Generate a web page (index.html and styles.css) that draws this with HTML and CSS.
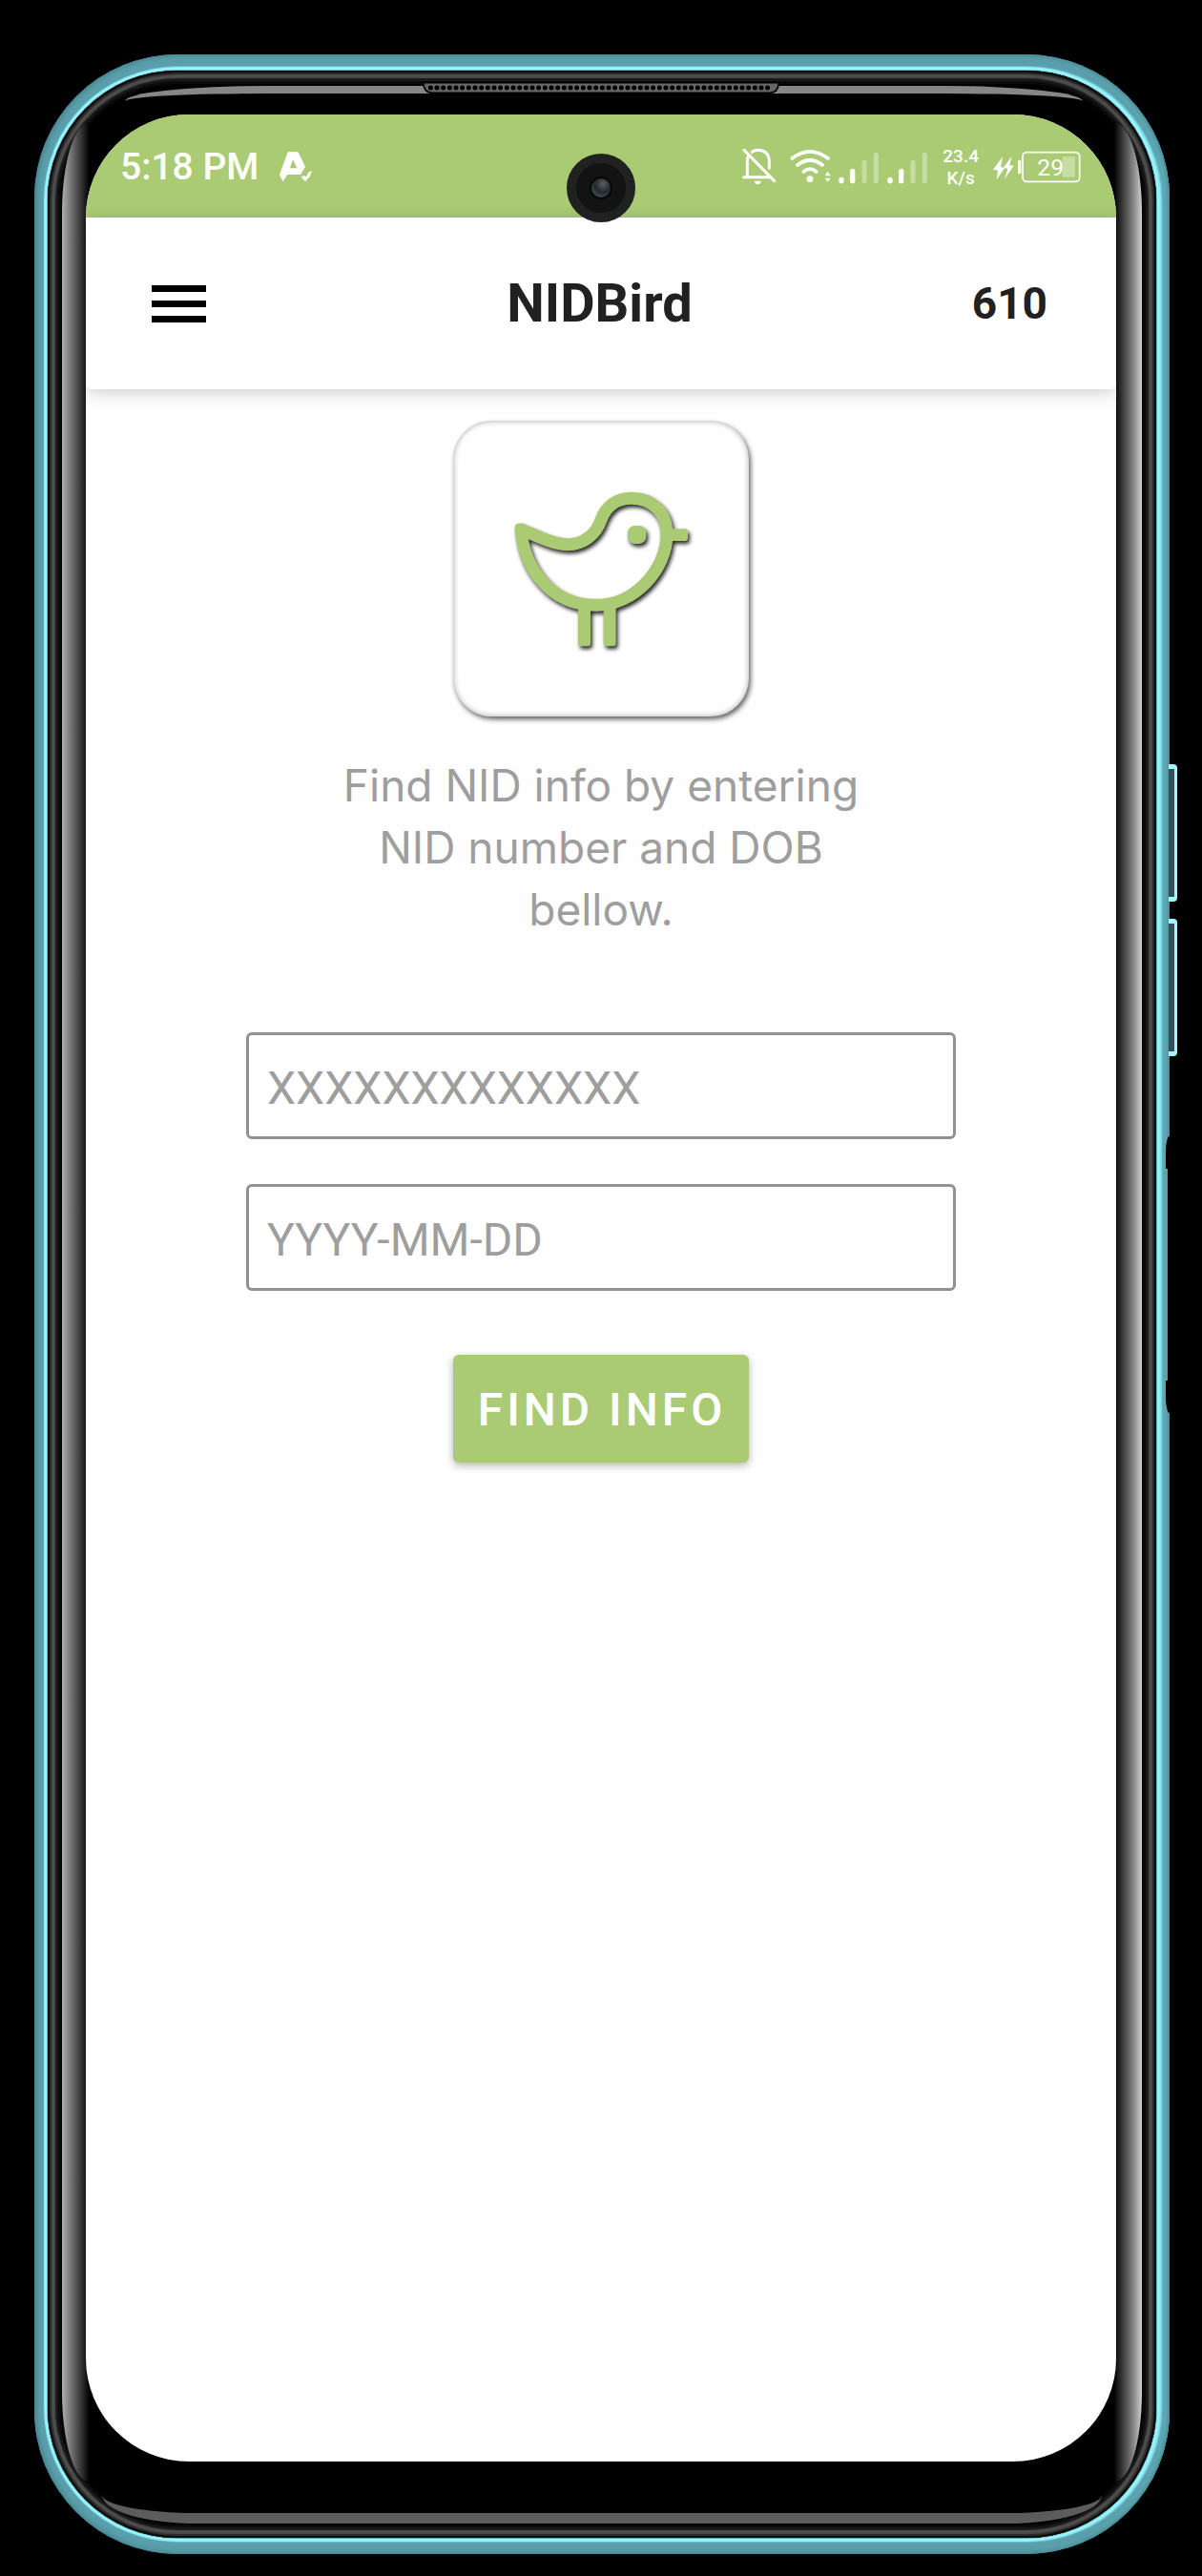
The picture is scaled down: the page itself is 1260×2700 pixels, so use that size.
FILE: index.html
```
<!DOCTYPE html>
<html lang="en">
<head>
<meta charset="utf-8">
<meta name="viewport" content="width=device-width, initial-scale=1">
<title>NIDBird</title>
<link rel="stylesheet" href="styles.css">
</head>
<body>
<div class="phone">
  <span class="side-key side-key-up"></span>
  <span class="side-key side-key-down"></span>
  <span class="side-recess"></span>
  <div class="bezel">
    <span class="glare glare-top"></span>
    <span class="glare glare-bottom"></span>
    <span class="glare glare-left"></span>
    <span class="glare glare-right"></span>
    <svg class="speaker" viewBox="0 0 1122 36" aria-hidden="true">
      <path d="M2 2H1120Q1118 34 1092 34H30Q4 34 2 2Z" fill="#666" stroke="#000" stroke-width="5"/>
      <path d="M25 18H1100" stroke="#000" stroke-width="15" stroke-linecap="round" stroke-dasharray="0 20"/>
    </svg>
    <div class="screen">
      <span class="camera"><span class="lens"></span></span>
      <div class="status-bar">
        <div class="status-left">
          <span class="clock">5:18 PM</span>
          <svg class="app-mark" viewBox="880 353 102 96" aria-hidden="true">
            <path fill="#fff" fill-rule="evenodd" d="M911 353H934Q938 353 940 357L961 400L946 425H905L891 447L880 426L905 357Q907 353 911 353ZM922 378L913 405H935Z"/>
            <path fill="#fff" d="M947 431L960 429L966 432L970 419L982 413L976 430L961 447Z"/>
          </svg>
        </div>
        <div class="status-right">
          <svg class="signals" viewBox="52 42 585 120" fill="none" stroke="#fff" stroke-linecap="round" aria-hidden="true">
            <path stroke-width="9" stroke-linejoin="round" d="M57 134H136M68 132V82Q68 70 74 65M83 55Q92 49 101 49Q136 50 137 84V106M58 49L153 146"/>
            <path d="M90 146H112Q109 156 101 156Q93 156 90 146Z" fill="#fff" stroke="none"/>
            <path stroke-width="11" d="M209 75Q265 32 322 75M226 96Q265 66 304 96M245 117Q265 100 285 117"/>
            <circle cx="265" cy="140" r="10" fill="#fff" stroke="none"/>
            <path d="M312 130L321 116L330 130ZM312 137L321 149L330 137Z" fill="#fff" stroke="none"/>
            <path stroke-width="16" d="M364 142V146M399 115V146M517 142V146M552 115V146"/>
            <path stroke-width="15" stroke-opacity=".35" d="M436 88V146M473 64V146M589 88V146M626 64V146"/>
          </svg>
          <span class="speed">23.4<br>K/s</span>
          <svg class="battery" viewBox="843 48 276 108" aria-label="Battery 29 percent">
            <path fill="#fff" d="M873 70L843 110L858 113L854 142L880 105L867 103ZM902 68L876 104L889 108L879 140L908 98L895 97Z"/>
            <rect x="921" y="80" width="10" height="44" rx="5" fill="#fff"/>
            <rect x="936" y="56" width="179" height="92" rx="13" fill="none" stroke="#fff" stroke-width="5"/>
            <rect x="1061" y="69" width="40" height="65" rx="4" fill="#fff" fill-opacity=".35"/>
            <text class="battery-level" x="982" y="129">29</text>
          </svg>
        </div>
      </div>
      <header class="app-bar">
        <button class="menu" type="button" aria-label="Menu"><span></span><span></span><span></span></button>
        <h1 class="title">NIDBird</h1>
        <span class="balance">610</span>
      </header>
      <main class="content">
        <div class="logo">
          <svg class="bird" viewBox="75 63 930 930" role="img" aria-label="Bird">
            <g fill="none" stroke="#aacb74" stroke-width="39" stroke-linejoin="round">
              <path d="M289 405C296 520 376 643 525 643C645 643 747 530 747 420C747 350 700 307 635 307C585 307 555 335 540 375C525 420 485 452 435 452C390 452 345 427 289 405Z"/>
            </g>
            <g fill="#aacb74">
              <rect x="269" y="386" width="36" height="30" rx="12"/>
              <rect x="468" y="640" width="39" height="132" rx="9"/>
              <rect x="548" y="640" width="39" height="132" rx="9"/>
              <rect x="740" y="403" width="73" height="38" rx="9"/>
              <rect x="624" y="393" width="58" height="57" rx="22"/>
            </g>
          </svg>
        </div>
        <p class="hint">Find NID info by entering NID number and DOB bellow.</p>
        <form class="lookup">
          <input class="field" type="text" aria-label="NID number" placeholder="XXXXXXXXXXXXX">
          <input class="field" type="text" aria-label="Date of birth" placeholder="YYYY-MM-DD">
          <button class="submit" type="button">FIND INFO</button>
        </form>
      </main>
    </div>
  </div>
</div>
</body>
</html>
```
FILE: styles.css
```
* { box-sizing: border-box; }

body {
  margin: 0;
  min-height: 100vh;
  padding: 57px 34px 23px 36px;
  display: flex;
  background: #000;
  font-family: Roboto, "Liberation Sans", sans-serif;
}

/* Phone body */
.phone {
  position: relative;
  flex: 1;
  min-width: 0;
  display: flex;
  padding: 17px 14px;
  border-radius: 150px;
  background: #5a9fab;
  box-shadow: inset 0 0 5px 2px #437f8a, inset -4px 0 6px #6fc3d0;
}

.side-key {
  position: absolute;
  left: calc(100% - 1px);
  width: 9px;
  height: 144px;
  border: 3px solid #9ff8ff;
  border-width: 5px 3px 5px 0;
  border-radius: 0 4px 4px 0;
  background: #355055;
}
.side-key-up { top: 744px; }
.side-key-down { top: 906px; }

.side-recess {
  position: absolute;
  top: 1134px;
  right: 0;
  width: 4px;
  height: 290px;
  border: solid #000;
  border-width: 34px 2px 34px 0;
  border-radius: 6px 0 0 6px / 24px 0 0 24px;
}

.bezel {
  position: relative;
  flex: 1;
  min-width: 0;
  display: flex;
  padding: 46px 42px 80px 40px;
  border-radius: 136px;
  background: #000;
  box-shadow:
    inset 0 0 0 2px #0c0c0c,
    inset 0 0 1px 4px #2a2a2a,
    inset 0 0 1px 8px #4c4c4c,
    inset 0 0 1px 11px #191919,
    inset 0 0 0 14px #0a0a0a,
    0 0 0 1px #5fb4c0,
    0 0 1px 4px #97f2fa,
    2px 0 2px 4px #8ae6f0;
}

.glare { position: absolute; }
.glare-top {
  top: 16px;
  left: 81px;
  right: 77px;
  height: 16px;
  border-top: 8px solid #868686;
  border-radius: 150px 150px 0 0 / 16px 16px 0 0;
}
.glare-bottom {
  bottom: 15px;
  left: 57px;
  right: 57px;
  height: 30px;
  border-bottom: 11px solid #5c5c5c;
  border-radius: 0 0 100px 100px / 0 0 30px 30px;
}
.glare-left,
.glare-right {
  top: 55px;
  bottom: 59px;
  width: 32px;
}
.glare-left {
  left: 15px;
  border-radius: 30px 4px 4px 30px / 100px 24px 24px 100px;
  background: linear-gradient(90deg, #b0b0b0, #7c7c7c 8px, #000 29px);
}
.glare-right {
  right: 15px;
  border-radius: 4px 30px 30px 4px / 24px 100px 100px 24px;
  background: linear-gradient(270deg, #d0d0d0, #8c8c8c 8px, #000 29px);
}

.speaker {
  position: absolute;
  top: 12px;
  left: 50%;
  width: 374px;
  height: 12px;
  margin-left: -188px;
}

.camera {
  position: absolute;
  z-index: 1;
  top: 41px;
  left: 50%;
  width: 72px;
  height: 72px;
  margin-left: -36px;
  display: grid;
  place-items: center;
  border: 10px solid #1f2221;
  border-radius: 50%;
  background: #121312;
}
.lens {
  width: 24px;
  height: 24px;
  border: 2px solid #070808;
  border-radius: 50%;
  background: radial-gradient(circle at 60% 30%, #596064, #22282b 45%, #3a4a50 75%, #101314);
}

/* Screen */
.screen {
  position: relative;
  flex: 1;
  min-width: 0;
  display: flex;
  flex-direction: column;
  overflow: hidden;
  border-radius: 108px;
  background: #fefefe;
}

.status-bar {
  height: 108px;
  padding: 2px 37px 0 36px;
  display: flex;
  align-items: center;
  justify-content: space-between;
  background: #aacb74;
  color: #fff;
}
.status-left { display: flex; align-items: center; gap: 22px; }
.status-right { display: flex; align-items: center; gap: 15px; }
.clock { font-size: 39px; line-height: 44px; font-weight: 500; }
.app-mark { width: 34px; height: 32px; }
.signals { width: 195px; height: 40px; }
.speed {
  font-size: 19px;
  line-height: 23px;
  font-weight: 500;
  text-align: center;
}
.battery { width: 92px; height: 36px; }
.battery-level { font-size: 74px; fill: #fff; }

.app-bar {
  height: 180px;
  padding: 0 72px 0 69px;
  display: grid;
  grid-template-columns: 1fr auto 1fr;
  align-items: center;
  border-radius: 5px;
  background: #fff;
  box-shadow: 0 3px 18px rgba(0, 0, 0, .2);
  color: #212121;
}
.menu {
  width: 57px;
  padding: 0;
  display: flex;
  flex-direction: column;
  gap: 9px;
  border: 0;
  background: none;
}
.menu span { height: 7px; background: #000; }
.title {
  margin: 0;
  font-size: 56px;
  line-height: 64px;
  font-weight: 700;
}
.balance {
  justify-self: end;
  font-size: 46px;
  line-height: 56px;
  font-weight: 700;
}

.content {
  padding: 33px 168px;
  display: flex;
  flex-direction: column;
  align-items: center;
}
.logo {
  width: 310px;
  height: 310px;
  border-radius: 40px;
  background: #fff;
  box-shadow:
    inset 0 0 6px rgba(0, 0, 0, .35),
    2px 3px 5px rgba(0, 0, 0, .6);
}
.bird {
  display: block;
  width: 100%;
  height: 100%;
  filter: drop-shadow(2px 3px 2px rgba(0, 0, 0, .85));
}
.hint {
  max-width: 570px;
  margin: 40px 0 0;
  font-family: Inter, Roboto, sans-serif;
  font-size: 46px;
  line-height: 65px;
  text-align: center;
  color: #9e9e9e;
}
.lookup {
  width: 100%;
  margin-top: 96px;
  display: flex;
  flex-direction: column;
  align-items: center;
  gap: 47px;
}
.field {
  width: 100%;
  height: 112px;
  padding: 4px 19px 0;
  border: 3px solid #919191;
  border-radius: 6px;
  background: #fff;
  font: 48px/56px Roboto, "Liberation Sans", sans-serif;
  color: #212121;
}
.field::placeholder { color: #9e9e9e; opacity: 1; }
.submit {
  height: 113px;
  margin-top: 20px;
  padding: 2px 24px 0 26px;
  border: 0;
  border-radius: 6px;
  background: #aacb74;
  box-shadow: 0 3px 8px rgba(0, 0, 0, .3);
  font: 500 48px/56px Roboto, "Liberation Sans", sans-serif;
  letter-spacing: 4px;
  color: #fff;
}
```
